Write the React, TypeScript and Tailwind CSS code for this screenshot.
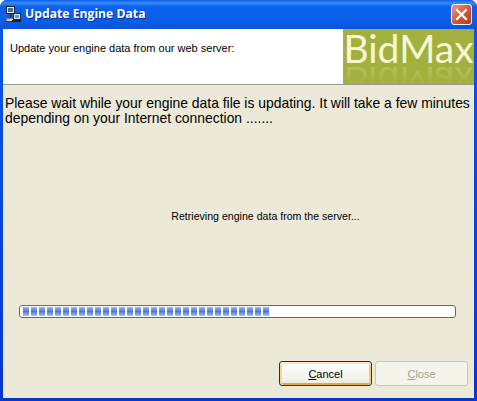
import React from "react";

function NetIcon() {
  return (
    <svg width="17" height="17" viewBox="0 0 17 17" shapeRendering="crispEdges">
      <rect x="1.5" y="0.5" width="8" height="7" fill="#e8e8e8" stroke="#222" />
      <rect x="3" y="2" width="5" height="4" fill="#3a6ea5" />
      <rect x="8.5" y="7.5" width="7" height="6" fill="#e8e8e8" stroke="#222" />
      <rect x="10" y="9" width="4" height="3" fill="#5f98d8" />
      <rect x="1" y="12" width="7" height="3" fill="#d8d8d0" stroke="#222" strokeWidth="0.5" />
      <rect x="5" y="8" width="1" height="4" fill="#222" />
      <rect x="7" y="14" width="9" height="2" fill="#222" />
      <rect x="2" y="13" width="3" height="1" fill="#e0c040" />
    </svg>
  );
}

function CloseBox() {
  return (
    <button className="w-[21px] h-[21px] rounded-[3px] border border-white flex items-center justify-center bg-gradient-to-br from-[#e89a80] via-[#d9573a] to-[#b8391c]">
      <svg width="13" height="13" viewBox="0 0 13 13">
        <path d="M2 2 L11 11 M11 2 L2 11" stroke="#fff" strokeWidth="2.2" strokeLinecap="square" />
      </svg>
    </button>
  );
}

export default function App() {
  const chunks = Array.from({ length: 31 });
  return (
    <div className="w-[477px] h-[401px] flex flex-col bg-gradient-to-b from-[#0a5ae6] to-[#0736d0] rounded-t-[7px] overflow-hidden font-['Liberation_Sans',sans-serif] text-black">
      <div className="h-[29px] shrink-0 flex items-center pl-[5px] pr-[5px] gap-[3px] bg-[linear-gradient(180deg,#0a5ce8_0%,#3a8cf8_10%,#0a62f0_22%,#0a5eea_70%,#0a52dc_100%)]">
        <NetIcon />
        <span className="font-['Open_Sans',sans-serif] font-bold text-[12.2px] text-white [text-shadow:1px_1px_0_#0a2f90] flex-1">
          Update Engine Data
        </span>
        <CloseBox />
      </div>
      <div className="flex-1 flex flex-col mx-[3px] mb-[3px] bg-[#ece9d8] min-h-0">
        <div className="h-[56px] shrink-0 flex bg-white border-b border-[#9c9a90]">
          <div className="flex-1 pl-[7px] pt-[12px] text-[11px] leading-[14px]">
            Update your engine data from our web server:
          </div>
          <div className="w-[131px] h-[55px] bg-[#a2b13e] overflow-hidden flex flex-col items-center text-[#f6f7d6] font-['Lato',sans-serif] text-[39px] leading-[36px]">
            <div className="h-[36px] shrink-0 pt-[1px]">BidMax</div>
            <div aria-hidden="true" className="h-[36px] shrink-0 scale-y-[-1] -mt-[1px] bg-gradient-to-t from-[#f6f7d6]/25 to-[#f6f7d6]/0 to-60% bg-clip-text text-transparent">BidMax</div>
          </div>
        </div>
        <p className="pl-[2px] pt-[11px] text-[13.9px] leading-[15px]">
          Please wait while your engine data file is updating. It will take a few minutes
          <br />
          depending on your Internet connection .......
        </p>
        <div className="mt-[83px] text-center text-[10.6px] leading-[14px] pl-[54px]">
          Retrieving engine data from the server...
        </div>
        <div className="mt-[82px] ml-[16px] w-[437px] h-[13px] shrink-0 bg-white border border-[#686868] rounded-[3px] flex items-center gap-[2px] pl-[3px] overflow-hidden">
          {chunks.map((_, i) => (
            <div key={i} className="w-[6px] h-[9px] shrink-0 bg-gradient-to-b from-[#9ab8ec] via-[#4a78d0] to-[#a8c4f0]" />
          ))}
        </div>
        <div className="mt-[43px] flex justify-end gap-[3px] pr-[6px]">
          <button className="w-[93px] h-[25px] pt-[1px] rounded-[3px] border border-[#003c74] shadow-[inset_0_2px_0_#fbe8c0,inset_2px_0_0_#f8d898,inset_-2px_0_0_#f0c878,inset_0_-2px_0_#e5a840] bg-gradient-to-b from-white to-[#ecebe2] text-[11px]">
            <span className="underline">C</span>ancel
          </button>
          <button disabled className="w-[93px] h-[25px] pt-[1px] rounded-[3px] border border-[#c9c7ba] bg-[#f5f4ea] text-[#a5a294] text-[11px]">
            <span className="underline">C</span>lose
          </button>
        </div>
      </div>
    </div>
  );
}
